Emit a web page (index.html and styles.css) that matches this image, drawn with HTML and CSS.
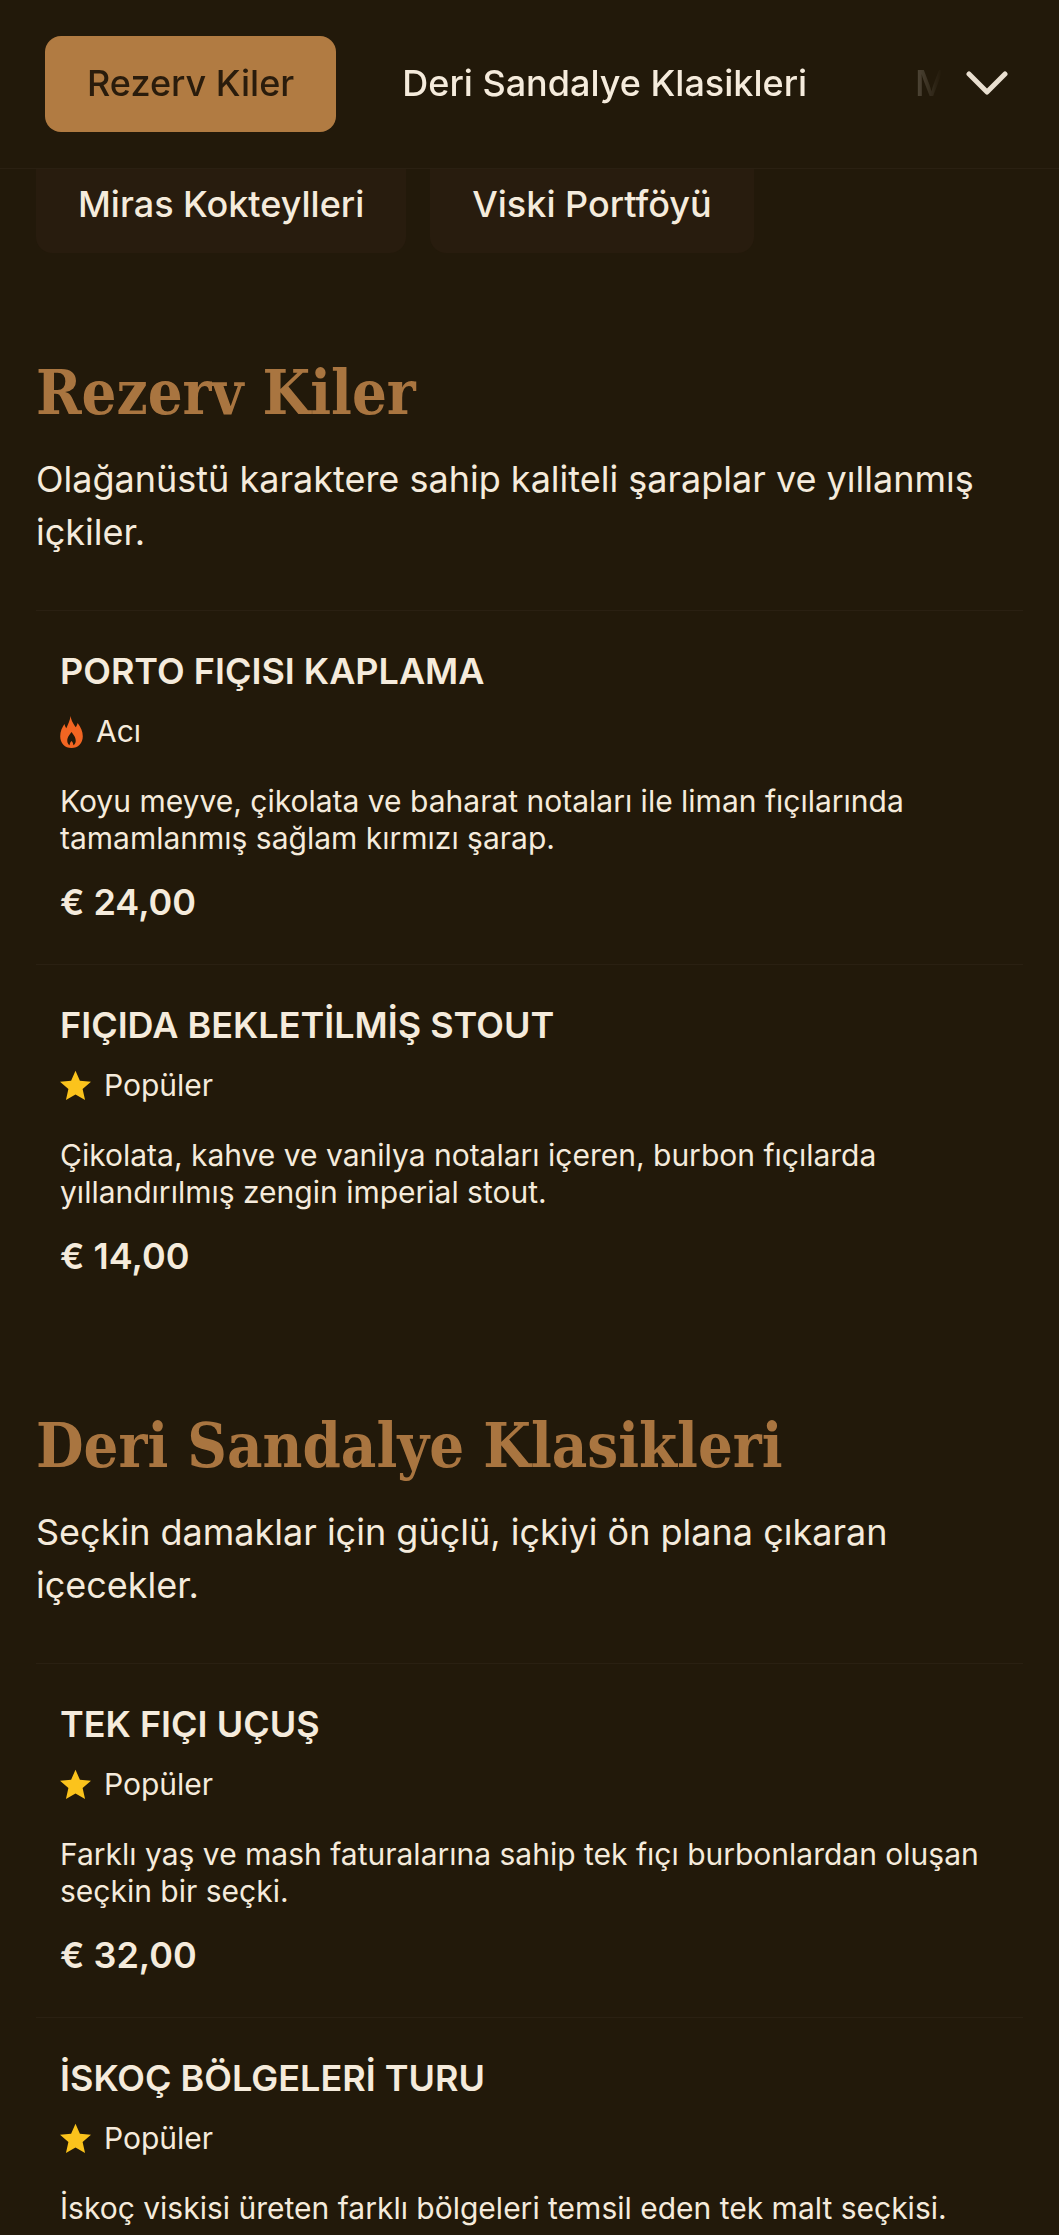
FILE: index.html
```html
<!DOCTYPE html>
<html lang="tr">
<head>
  <meta charset="UTF-8" />
  <title>Menü</title>
  <link rel="stylesheet" href="styles.css">
</head>
<body>

<header class="topbar">
  <nav class="topbar-links">
    <a class="pill active" href="#rezerv">Rezerv Kiler</a>
    <a class="pill" href="#deri">Deri Sandalye Klasikleri</a>
    <a class="pill" href="#miras">Miras Kokteylleri</a>
  </nav>
  <svg class="chevron" viewBox="0 0 42 24" fill="none" stroke="#e9dfd0" stroke-width="5" stroke-linecap="round" stroke-linejoin="round">
    <path d="M3 3 L21 21 L39 3"/>
  </svg>
</header>

<div class="more-links">
  <a class="chip" href="#miras">Miras Kokteylleri</a>
  <a class="chip" href="#viski">Viski Portföyü</a>
</div>

<section class="menu-section" id="rezerv">
  <h2>Rezerv Kiler</h2>
  <p class="intro">Olağanüstü karaktere sahip kaliteli şaraplar ve yıllanmış içkiler.</p>

  <article class="item">
    <h3>PORTO FIÇISI KAPLAMA</h3>
    <div class="tag">
      <svg class="flame" viewBox="0 0 24 34"><path fill="#f26522" fill-rule="evenodd" d="M11 0 C12 6 14 8 16.500 12 C17.500 10.500 18 9.500 18.500 7.500 C22 12 24 16.500 24 21.500 C24 29 19 34 12 34 C5 34 0 29 0 21.500 C0 16 2 12.500 4.500 8.500 C5 10.500 5.500 11.500 6.500 13 C8 9 10.500 5 11 0 Z M12 17 C10 20 7.500 22 7.500 26.500 C7.500 29 9 30.500 10 31 C10 29 11 27.500 12 26.500 C13 27.500 14 29 14 31 C15 30.500 16.500 29 16.500 26.500 C16.500 22 14 20 12 17 Z"/></svg>
      <span>Acı</span>
    </div>
    <p class="desc">Koyu meyve, çikolata ve baharat notaları ile liman fıçılarında tamamlanmış sağlam kırmızı şarap.</p>
    <div class="price">€ 24,00</div>
  </article>

  <article class="item">
    <h3>FIÇIDA BEKLETİLMİŞ STOUT</h3>
    <div class="tag">
      <svg class="star" viewBox="0 0 24 24"><path fill="#fbc31c" d="M12 .500 L15.400 8.300 L24 9.100 L17.500 14.800 L19.400 23.300 L12 18.900 L4.600 23.300 L6.500 14.800 L0 9.100 L8.600 8.300 Z"/></svg>
      <span>Popüler</span>
    </div>
    <p class="desc">Çikolata, kahve ve vanilya notaları içeren, burbon fıçılarda yıllandırılmış zengin imperial stout.</p>
    <div class="price">€ 14,00</div>
  </article>
</section>

<section class="menu-section" id="deri">
  <h2>Deri Sandalye Klasikleri</h2>
  <p class="intro">Seçkin damaklar için güçlü, içkiyi ön plana çıkaran içecekler.</p>

  <article class="item">
    <h3>TEK FIÇI UÇUŞ</h3>
    <div class="tag">
      <svg class="star" viewBox="0 0 24 24"><path fill="#fbc31c" d="M12 .500 L15.400 8.300 L24 9.100 L17.500 14.800 L19.400 23.300 L12 18.900 L4.600 23.300 L6.500 14.800 L0 9.100 L8.600 8.300 Z"/></svg>
      <span>Popüler</span>
    </div>
    <p class="desc">Farklı yaş ve mash faturalarına sahip tek fıçı burbonlardan oluşan seçkin bir seçki.</p>
    <div class="price">€ 32,00</div>
  </article>

  <article class="item">
    <h3>İSKOÇ BÖLGELERİ TURU</h3>
    <div class="tag">
      <svg class="star" viewBox="0 0 24 24"><path fill="#fbc31c" d="M12 .500 L15.400 8.300 L24 9.100 L17.500 14.800 L19.400 23.300 L12 18.900 L4.600 23.300 L6.500 14.800 L0 9.100 L8.600 8.300 Z"/></svg>
      <span>Popüler</span>
    </div>
    <p class="desc">İskoç viskisi üreten farklı bölgeleri temsil eden tek malt seçkisi.</p>
  </article>
</section>

</body>
</html>
```

FILE: styles.css
```css
* {
  box-sizing: border-box;
}
body {
  margin: 0;
  background: #22190a;
  color: #f5ebdc;
  font-family: Inter, 'Noto Sans', sans-serif;
}
a {
  color: inherit;
  text-decoration: none;
}

.topbar {
  position: relative;
  z-index: 2;
  display: flex;
  align-items: center;
  height: 169px;
  padding: 0 51px 0 45px;
  background: #22190a;
  border-bottom: 1px solid #2a2012;
}
.topbar-links {
  flex: 1;
  min-width: 0;
  display: flex;
  gap: 24px;
  overflow: hidden;
  mask-image: linear-gradient(to right, #000 85%, transparent 98%);
  -webkit-mask-image: linear-gradient(to right, #000 85%, transparent 98%);
}
.pill {
  flex: none;
  padding: 26px 42px 28px;
  border-radius: 16px;
  font-size: 36px;
  font-weight: 500;
  line-height: 42px;
}
.pill.active {
  background: #b17b42;
  color: #2a1c0c;
}
.chevron {
  flex: none;
  width: 42px;
  height: 24px;
  margin: 0 0 3px 6px;
}

.more-links {
  display: flex;
  gap: 24px;
  margin: -40px 0 0;
  padding: 0 36px;
}
.chip {
  padding: 55px 42px 28px;
  border-radius: 16px;
  background: #281c0e;
  font-size: 36px;
  font-weight: 500;
  line-height: 41px;
}

.menu-section {
  padding: 0 36px;
  margin-top: 100px;
}
.menu-section + .menu-section {
  margin-top: 88px;
}
h2 {
  margin: 0;
  color: #a97540;
  font-family: 'DejaVu Serif Condensed', 'Liberation Serif', serif;
  font-size: 61px;
  font-weight: 700;
  line-height: 80px;
}
.intro {
  margin: 20px 0 51px;
  font-size: 36px;
  line-height: 53px;
}
.item {
  padding: 40px 24px 40px;
  border-top: 1px solid #2a2012;
}
.item h3 {
  margin: 0;
  font-size: 36px;
  font-weight: 600;
  line-height: 41px;
}
.tag {
  display: flex;
  align-items: center;
  gap: 13px;
  margin-top: 19px;
  font-size: 30px;
  line-height: 41px;
}
.flame {
  width: 23px;
  height: 32px;
}
.star {
  width: 31px;
  height: 31px;
}
.desc {
  margin: 31px 0 0;
  font-size: 30px;
  line-height: 36.500px;
}
.price {
  margin-top: 24px;
  font-size: 36px;
  font-weight: 600;
  line-height: 44px;
}
```
